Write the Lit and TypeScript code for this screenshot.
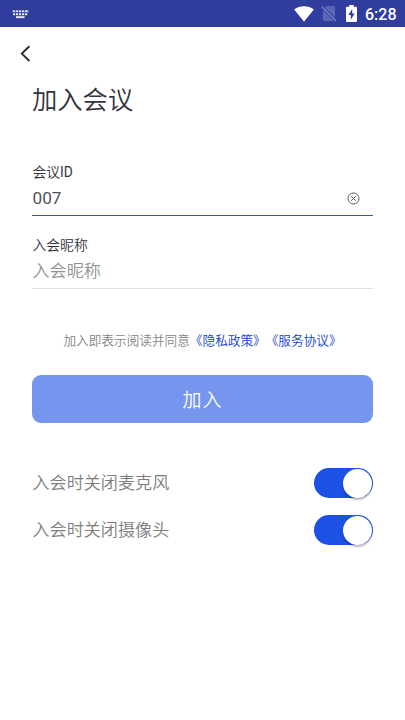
import { LitElement, html, css, svg } from "lit";
import { customElement, property, state } from "lit/decorators.js";
import { classMap } from "lit/directives/class-map.js";

@customElement("status-bar")
class StatusBar extends LitElement {
  static styles = css`
    :host {
      display: flex;
      align-items: center;
      height: 27px;
      padding: 0 9px 0 12px;
      box-sizing: border-box;
      background: #303d9f;
      color: #fff;
      font: 500 16px/27px Roboto, sans-serif;
    }
    svg { display: block; }
    .spacer { flex: 1; }
    .keyboard { margin-top: 1px; }
    .wifi { margin-right: 7px; }
    .sim { margin-right: 9px; }
    .battery { margin-right: 8px; }
    .time { width: 31px; white-space: nowrap; padding-top: 1px; }
  `;

  render() {
    const rows = [0, 3].map((y) =>
      [0, 1, 2, 3, 4].map((i) => svg`<rect x=${0.7 + i * 3 + (y ? 0.3 : 0)} y=${y + 0.3} width="2.2" height="1.9" />`)
    );
    return html`
      <svg class="keyboard" width="17" height="9" viewBox="0 0 17 9" fill="#e6e8f7">
        ${rows}
        <rect x="15.2" y="0.3" width="1.2" height="1.9" />
        <rect x="4" y="6.2" width="8.6" height="1.9" />
      </svg>
      <span class="spacer"></span>
      <svg class="wifi" width="20" height="16" viewBox="0 0 20 16">
        <path d="M0.2 3.6C5.8-.8 14.2-.8 19.8 3.6L10 15.8Z" fill="#fff" />
      </svg>
      <svg class="sim" width="16" height="17" viewBox="0 0 16 17">
        <path d="M5.6 1H12.6Q14 1 14 2.4V12.2L3.8 2.8Z M1.9 5L13.2 16H3.3Q1.9 16 1.9 14.6Z" fill="#5a65b3" />
        <path d="M.8 1.8L15.2 16" stroke="#7b84c3" stroke-width="1.3" />
      </svg>
      <svg class="battery" width="11" height="17" viewBox="0 0 11 17">
        <path d="M3.3 0H7.7V1.8H10Q11 1.8 11 2.8V16Q11 17 10 17H1Q0 17 0 16V2.8Q0 1.8 1 1.8H3.3Z" fill="#fff" />
        <path d="M6.2 4L2.4 10H4.8V14.8L8.6 8.6H6.2Z" fill="#303d9f" />
      </svg>
      <span class="time">6:28</span>
    `;
  }
}

@customElement("toggle-switch")
class ToggleSwitch extends LitElement {
  @property({ type: Boolean }) on = false;

  static styles = css`
    :host { display: block; }
    .track {
      display: flex;
      align-items: center;
      width: 59px;
      height: 30px;
      padding: 0 1px;
      box-sizing: border-box;
      border: 0;
      border-radius: 16px;
      background: #c8c8c8;
    }
    .track.on { justify-content: flex-end; background: #1b51e5; }
    .knob {
      width: 29px;
      height: 29px;
      border-radius: 50%;
      background: #fff;
      box-shadow: 0 2px 2px rgba(0, 0, 0, 0.28);
    }
  `;

  render() {
    return html`
      <button class=${classMap({ track: true, on: this.on })} role="switch"
        aria-checked=${this.on ? "true" : "false"} @click=${() => (this.on = !this.on)}>
        <span class="knob"></span>
      </button>
    `;
  }
}

@customElement("app-root")
class AppRoot extends LitElement {
  @state() private meetingId = "007";

  static styles = css`
    :host {
      display: block;
      min-height: 720px;
      background: #fff;
      color: #33353c;
      font-family: Roboto, "Noto Sans CJK SC", sans-serif;
      font-weight: 350;
      text-spacing-trim: space-all;
    }
    .nav { height: 53px; padding: 18px 0 0 20px; box-sizing: border-box; }
    .nav svg { display: block; }
    main { padding: 0 32px; }
    h1 { margin: 0; font-size: 25.3px; line-height: 42px; font-weight: 350; white-space: nowrap; }
    .field {
      display: flex;
      flex-direction: column;
      box-sizing: border-box;
      border-bottom: 1px solid #e1e1e3;
    }
    .field.active { height: 56px; margin-top: 38px; border-bottom-color: #3558a8; }
    .field.plain { height: 56px; margin-top: 17px; }
    label { padding-left: 0.5px; font-size: 13.8px; line-height: 24px; }
    .latin { font-weight: 400; }
    .row { display: flex; align-items: center; height: 28px; padding-right: 13px; }
    input {
      flex: 1;
      min-width: 0;
      height: 28px;
      padding: 0 0 0 0.5px;
      border: 0;
      outline: 0;
      background: none;
      color: #505258;
      font: 400 17.2px/28px Roboto, "Noto Sans CJK SC", sans-serif;
    }
    input::placeholder { color: #929292; opacity: 1; font-size: 17.1px; font-weight: 350; }
    .terms {
      margin: 40px 0 0;
      text-align: center;
      font-size: 12.65px;
      line-height: 24px;
      color: #868686;
      white-space: nowrap;
    }
    .terms a { color: #0f41d0; }
    .join {
      display: block;
      width: 100%;
      height: 48px;
      margin-top: 22px;
      padding: 0;
      border: 0;
      border-radius: 9px;
      background: #7595ee;
      color: #fff;
      font: 350 19px/48px "Noto Sans CJK SC", sans-serif;
      letter-spacing: 1px;
    }
    .options { display: flex; flex-direction: column; gap: 17px; margin-top: 45px; }
    .option {
      display: flex;
      align-items: flex-start;
      justify-content: space-between;
      height: 30px;
      padding-left: 0.5px;
      font-size: 17.1px;
      line-height: 30px;
      color: #7d7d7d;
    }
  `;

  render() {
    return html`
      <status-bar></status-bar>
      <div class="nav">
        <svg width="12" height="17" viewBox="0 0 12 17" fill="none" stroke="#2a2b30" stroke-width="1.9">
          <path d="M9.4 1.2L1.8 8.6L9.4 16" />
        </svg>
      </div>
      <main>
        <h1>加入会议</h1>
        <div class="field active">
          <label>会议<span class="latin">ID</span></label>
          <div class="row">
            <input .value=${this.meetingId} />
            <svg width="13" height="13" viewBox="0 0 13 13" fill="none" stroke="#55575c" stroke-width="1">
              <circle cx="6.5" cy="6.5" r="5.5" />
              <path d="M4.2 4.2L8.8 8.8M8.8 4.2L4.2 8.8" />
            </svg>
          </div>
        </div>
        <div class="field plain">
          <label>入会昵称</label>
          <div class="row"><input placeholder="入会昵称" /></div>
        </div>
        <p class="terms">加入即表示阅读并同意<a>《隐私政策》</a><a>《服务协议》</a></p>
        <button class="join">加入</button>
        <div class="options">
          <div class="option"><span>入会时关闭麦克风</span><toggle-switch on></toggle-switch></div>
          <div class="option"><span>入会时关闭摄像头</span><toggle-switch on></toggle-switch></div>
        </div>
      </main>
    `;
  }
}
